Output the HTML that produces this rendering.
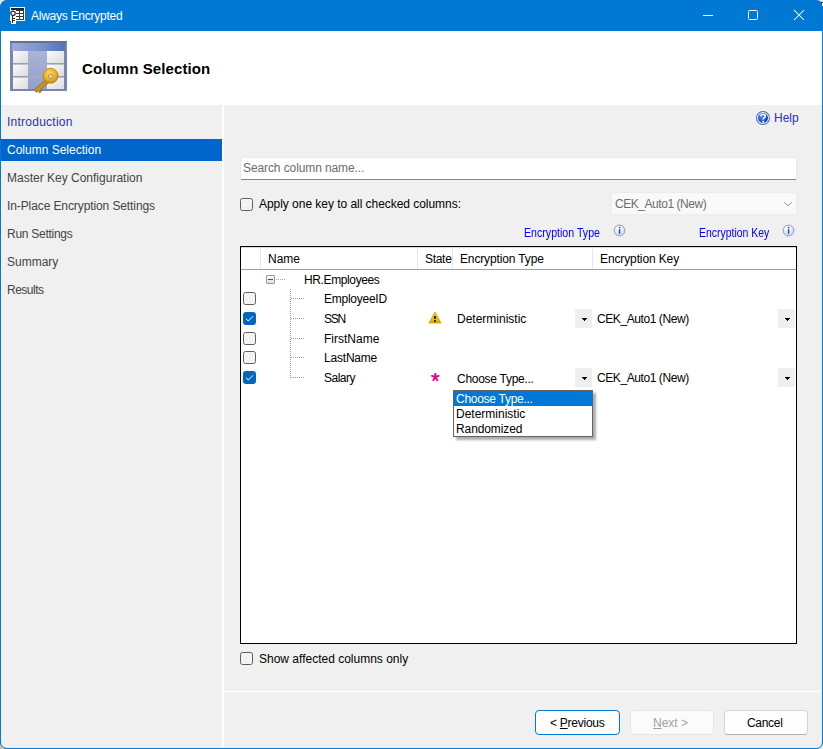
<!DOCTYPE html>
<html><head><meta charset="utf-8">
<style>
html,body{margin:0;padding:0;}
body{width:823px;height:749px;position:relative;overflow:hidden;background:#e6e6e6;font-family:"Liberation Sans",sans-serif;font-size:12px;color:#000;}
.a{position:absolute;}
.t{position:absolute;white-space:pre;font-size:12px;line-height:16px;height:16px;}
.win{position:absolute;left:0;top:0;width:823px;height:749px;background:#0078d4;border-radius:7px 7px 7px 7px;overflow:hidden;}
.cb{position:absolute;width:11px;height:11px;border:1px solid #5f5f5f;border-radius:2.5px;background:#f3f3f3;}
.cbc{position:absolute;width:13px;height:13px;border-radius:3px;background:#0067c0;}
.dd{position:absolute;width:17px;height:19px;background:#efefef;}
.dotv{position:absolute;width:1px;background-image:linear-gradient(to bottom,#a0a0a0 50%,transparent 50%);background-size:1px 2px;}
.doth{position:absolute;height:1px;background-image:linear-gradient(to right,#a0a0a0 50%,transparent 50%);background-size:2px 1px;}
</style></head>
<body>
<div class="a" style="left:0;top:739px;width:10px;height:10px;background:#c4c4c4"></div>
<div class="win">
  <!-- title bar text -->
  <svg class="a" style="left:10px;top:7px" width="16" height="17" viewBox="0 0 16 17" shape-rendering="crispEdges">
    <rect x="0" y="0" width="15" height="14" fill="#fff"/>
    <rect x="1" y="1" width="13" height="12" fill="#3a3a3a"/>
    <rect x="1" y="1" width="13" height="2" fill="#222"/>
    <rect x="6" y="4" width="3" height="2" fill="#fff"/><rect x="10" y="4" width="3" height="2" fill="#fff"/>
    <rect x="6" y="7" width="3" height="2" fill="#fff"/><rect x="10" y="7" width="3" height="2" fill="#fff"/>
    <rect x="6" y="10" width="3" height="2" fill="#fff"/><rect x="10" y="10" width="3" height="2" fill="#fff"/>
    <rect x="0" y="3" width="6" height="7" fill="#fff"/>
    <rect x="1" y="8" width="5" height="9" fill="#fff"/>
    <g shape-rendering="auto"><circle cx="3" cy="6.3" r="2.2" fill="#fff" stroke="#333" stroke-width="1.3"/></g>
    <rect x="2" y="9" width="1" height="7" fill="#333"/>
    <rect x="2" y="11" width="3" height="1" fill="#333"/><rect x="2" y="13" width="3" height="1" fill="#333"/>
  </svg>
  <div class="t" style="left:31px;top:8px;color:#fff;letter-spacing:-0.25px">Always Encrypted</div>
  <!-- window controls -->
  <div class="a" style="left:703px;top:15px;width:10px;height:1px;background:#fff"></div>
  <div class="a" style="left:748px;top:10px;width:8px;height:8px;border:1px solid #fff;border-radius:1.5px"></div>
  <svg class="a" style="left:793px;top:9px" width="12" height="12" viewBox="0 0 12 12"><path d="M1 1L11 11M11 1L1 11" stroke="#fff" stroke-width="1.05"/></svg>

  <!-- client area -->
  <div class="a" style="left:1px;top:31px;width:821px;height:717px;background:#f0f0f0;"></div>
  <div class="a" style="left:1px;top:31px;width:821px;height:74px;background:#fff;"></div>
  <!-- header icon -->
  <svg class="a" style="left:10px;top:40px" width="58" height="54" viewBox="0 0 58 54">
    <defs>
      <linearGradient id="hb" x1="0" x2="1" y1="0" y2="0"><stop offset="0" stop-color="#9eaad8"/><stop offset="0.5" stop-color="#8094cc"/><stop offset="1" stop-color="#4f72c0"/></linearGradient>
      <linearGradient id="cw" x1="0" x2="1" y1="0" y2="1"><stop offset="0" stop-color="#fbfbfb"/><stop offset="1" stop-color="#dcdcdc"/></linearGradient>
      <linearGradient id="cm" x1="0" x2="0" y1="0" y2="1"><stop offset="0" stop-color="#aab3d8"/><stop offset="1" stop-color="#93a0cc"/></linearGradient>
      <radialGradient id="gold" cx="0.45" cy="0.35" r="0.75"><stop offset="0" stop-color="#ffd75a"/><stop offset="0.55" stop-color="#e9b124"/><stop offset="1" stop-color="#b67d12"/></radialGradient>
    </defs>
    <rect x="0" y="1" width="57" height="50" fill="#7a86b0"/>
    <rect x="0" y="1" width="57" height="2" fill="#676f94"/>
    <rect x="2" y="3" width="53" height="8" fill="url(#hb)"/>
    <rect x="3" y="11" width="15" height="12" fill="url(#cw)"/>
    <rect x="18" y="11" width="19" height="38" fill="url(#cm)"/>
    <rect x="37" y="11" width="17" height="12" fill="url(#cw)"/>
        <rect x="3" y="24" width="15" height="12" fill="url(#cw)"/>
    <rect x="37" y="24" width="17" height="12" fill="url(#cw)"/>
        <rect x="3" y="37" width="15" height="12" fill="url(#cw)"/>
    <rect x="37" y="37" width="17" height="12" fill="url(#cw)"/>
    <rect x="3" y="23.4" width="51" height="1.3" fill="#a9aec0"/>
    <rect x="3" y="36.4" width="51" height="1.3" fill="#a9aec0"/>
    <path d="M36.5 39 L24.5 49.5 L26.5 52.5 L28.5 51 L29.5 53 L31.5 51.5 L30.5 49.5 L39.5 42 Z" fill="#c8921e" stroke="#8f6412" stroke-width="0.7"/>
    <circle cx="40.6" cy="35.8" r="7.5" fill="url(#gold)" stroke="#a97614" stroke-width="0.7"/>
    <circle cx="40.7" cy="36.3" r="2.3" fill="#cfcfcf" stroke="#9a7420" stroke-width="0.6"/>
  </svg>
  <div class="t" style="left:82px;top:59px;font-size:15px;line-height:20px;height:20px;font-weight:bold;letter-spacing:0.1px">Column Selection</div>

  <!-- left nav -->
  <div class="a" style="left:1px;top:105px;width:221px;height:642px;background:#f0f0f0;"></div>
  <div class="a" style="left:222px;top:105px;width:2px;height:642px;background:#fff;"></div>
  <div class="a" style="left:1px;top:139px;width:221px;height:22px;background:#0066cc;"></div>
  <div class="t" style="left:7px;top:114px;color:#2d2dc6;letter-spacing:0.25px">Introduction</div>
  <div class="t" style="left:7px;top:142px;color:#fff">Column Selection</div>
  <div class="t" style="left:7px;top:170px;color:#444">Master Key Configuration</div>
  <div class="t" style="left:7px;top:198px;color:#444;letter-spacing:-0.1px">In-Place Encryption Settings</div>
  <div class="t" style="left:7px;top:226px;color:#444;letter-spacing:-0.27px">Run Settings</div>
  <div class="t" style="left:7px;top:254px;color:#444">Summary</div>
  <div class="t" style="left:7px;top:282px;color:#444;letter-spacing:-0.5px">Results</div>

  <!-- right panel -->
  <div class="a" style="left:224px;top:105px;width:597px;height:586px;background:#f0f0f0;"></div>
  <div class="a" style="left:224px;top:692px;width:597px;height:55px;background:#f0f0f0;"></div>

  <!-- help -->
  <svg class="a" style="left:756px;top:111px" width="15" height="15" viewBox="0 0 15 15">
    <defs><radialGradient id="hg" cx="0.35" cy="0.35" r="0.75"><stop offset="0" stop-color="#4a8cf5"/><stop offset="1" stop-color="#0a36a0"/></radialGradient></defs>
    <circle cx="7" cy="7" r="7" fill="#4a6cb8"/>
    <circle cx="7" cy="7" r="6" fill="#e8f0ff"/>
    <circle cx="7" cy="7" r="5" fill="url(#hg)"/>
    <path d="M4.9 5.2 Q5 3.3 7.2 3.3 Q9.4 3.4 9.3 5.1 Q9.2 6.2 8 6.9 Q7.2 7.4 7.2 8.6" fill="none" stroke="#fff" stroke-width="1.6"/>
    <rect x="6.3" y="9.8" width="1.8" height="1.7" fill="#fff"/>
  </svg>
  <div class="t" style="left:774px;top:110px;color:#2d2dc6">Help</div>

  <!-- search -->
  <div class="a" style="left:240px;top:157px;width:557px;height:23px;background:#e8e8e8;border-radius:2px;"></div>
  <div class="a" style="left:241px;top:158px;width:555px;height:21px;background:#fff;border-radius:1px;"></div>
  <div class="a" style="left:241px;top:179px;width:555px;height:1px;background:#868686;"></div>
  <div class="t" style="left:243px;top:160px;color:#6d6d6d;letter-spacing:-0.1px">Search column name...</div>

  <!-- apply one key -->
  <div class="cb" style="left:240px;top:198px;"></div>
  <div class="t" style="left:259px;top:196px;letter-spacing:-0.04px">Apply one key to all checked columns:</div>
  <div class="a" style="left:611px;top:192px;width:186px;height:23px;background:#ececec;border-radius:2px;"></div>
  <div class="a" style="left:612px;top:193px;width:184px;height:21px;background:#f9f9f9;"></div>
  <div class="t" style="left:615px;top:196px;color:#6d6d6d;letter-spacing:-0.45px">CEK_Auto1 (New)</div>
  <svg class="a" style="left:783px;top:200px" width="10" height="7" viewBox="0 0 10 7"><path d="M1.3 2.2L5 5.8L8.7 2.2" fill="none" stroke="#7a7a7a" stroke-width="0.85"/></svg>

  <div class="t" style="left:524px;top:225px;color:#0000ff;transform-origin:0 0;transform:scaleX(0.885)">Encryption Type</div>
  <div class="t" style="left:699px;top:225px;color:#0000ff;transform-origin:0 0;transform:scaleX(0.87)">Encryption Key</div>
  <svg class="a" style="left:613px;top:224px" width="13" height="13" viewBox="0 0 13 13">
    <defs><radialGradient id="ig" cx="0.4" cy="0.3" r="0.8"><stop offset="0" stop-color="#ffffff"/><stop offset="1" stop-color="#c8d4e8"/></radialGradient></defs>
    <circle cx="6.5" cy="6.5" r="5.4" fill="url(#ig)" stroke="#7f93b8" stroke-width="0.9"/>
    <rect x="5.8" y="2.8" width="1.5" height="1.5" fill="#2a4ea8"/>
    <rect x="5.8" y="5.2" width="1.5" height="4.6" fill="#2a4ea8"/>
  </svg>
  <svg class="a" style="left:782px;top:224px" width="13" height="13" viewBox="0 0 13 13">
    <circle cx="6.5" cy="6.5" r="5.4" fill="url(#ig)" stroke="#7f93b8" stroke-width="0.9"/>
    <rect x="5.8" y="2.8" width="1.5" height="1.5" fill="#2a4ea8"/>
    <rect x="5.8" y="5.2" width="1.5" height="4.6" fill="#2a4ea8"/>
  </svg>

  <!-- grid -->
  <div class="a" style="left:240px;top:246px;width:555px;height:396px;border:1px solid #000;background:#fff;"></div>
  <div class="a" style="left:241px;top:247px;width:555px;height:1px;background:#d8d8d8;"></div>
  <div class="a" style="left:241px;top:269px;width:555px;height:1px;background:#a0a0a0;"></div>
  <div class="a" style="left:260px;top:249px;width:1px;height:20px;background:#e5e5e5;"></div>
  <div class="a" style="left:417px;top:249px;width:1px;height:20px;background:#e5e5e5;"></div>
  <div class="a" style="left:452px;top:249px;width:1px;height:20px;background:#e5e5e5;"></div>
  <div class="a" style="left:592px;top:249px;width:1px;height:20px;background:#e5e5e5;"></div>
  <div class="t" style="left:268px;top:251px;">Name</div>
  <div class="t" style="left:425px;top:251px;letter-spacing:-0.3px">State</div>
  <div class="t" style="left:460px;top:251px;letter-spacing:-0.14px">Encryption Type</div>
  <div class="t" style="left:600px;top:251px;letter-spacing:-0.12px">Encryption Key</div>

  <!-- tree -->
  <div class="a" style="left:266px;top:275px;width:7px;height:7px;border:1px solid #9a9a9a;border-radius:1px;background:linear-gradient(#fafafa,#e0e0e0);"></div>
  <div class="a" style="left:268px;top:279px;width:5px;height:1px;background:#3050a0;"></div>
  <div class="doth" style="left:276px;top:279px;width:10px;"></div>
  <div class="dotv" style="left:290px;top:289px;height:89px;"></div>
  <div class="doth" style="left:291px;top:298px;width:14px;"></div>
  <div class="doth" style="left:291px;top:318px;width:14px;"></div>
  <div class="doth" style="left:291px;top:338px;width:14px;"></div>
  <div class="doth" style="left:291px;top:357px;width:14px;"></div>
  <div class="doth" style="left:291px;top:377px;width:14px;"></div>

  <div class="t" style="left:304px;top:272px;letter-spacing:-0.38px">HR.Employees</div>
  <div class="cb" style="left:243px;top:292px;"></div>
  <div class="t" style="left:324px;top:291px;letter-spacing:-0.25px">EmployeeID</div>
  <div class="cbc" style="left:243px;top:312px;"><svg width="13" height="13" viewBox="0 0 13 13" style="position:absolute;left:0;top:0"><path d="M3 6.8L5.3 9L10 4.3" fill="none" stroke="#fff" stroke-width="1"/></svg></div>
  <div class="t" style="left:324px;top:311px;letter-spacing:-1.2px">SSN</div>
  <div class="cb" style="left:243px;top:332px;"></div>
  <div class="t" style="left:324px;top:331px;">FirstName</div>
  <div class="cb" style="left:243px;top:351px;"></div>
  <div class="t" style="left:324px;top:350px;letter-spacing:-0.2px">LastName</div>
  <div class="cbc" style="left:243px;top:371px;"><svg width="13" height="13" viewBox="0 0 13 13" style="position:absolute;left:0;top:0"><path d="M3 6.8L5.3 9L10 4.3" fill="none" stroke="#fff" stroke-width="1"/></svg></div>
  <div class="t" style="left:324px;top:370px;letter-spacing:-0.5px">Salary</div>

  <!-- SSN row -->
  <svg class="a" style="left:428px;top:311px" width="14" height="13" viewBox="0 0 14 13">
    <defs><linearGradient id="wg" x1="0" x2="0" y1="0" y2="1"><stop offset="0" stop-color="#f0d020"/><stop offset="1" stop-color="#e0b000"/></linearGradient></defs>
    <path d="M7 1 L13 12 L1 12 Z" fill="url(#wg)" stroke="#c9a000" stroke-width="0.8" stroke-linejoin="round"/>
    <rect x="6.1" y="5" width="1.8" height="2.8" fill="#111"/>
    <rect x="6.1" y="9.2" width="1.8" height="1.8" fill="#111"/>
  </svg>
  <div class="t" style="left:457px;top:311px;">Deterministic</div>
  <div class="dd" style="left:575px;top:309px;"><svg width="17" height="19" style="position:absolute;left:0;top:0" shape-rendering="crispEdges"><rect x="7" y="9" width="5" height="1" fill="#000"/><rect x="8" y="10" width="3" height="1" fill="#000"/><rect x="9" y="11" width="1" height="1" fill="#000"/></svg></div>
  <div class="t" style="left:597px;top:311px;letter-spacing:-0.42px">CEK_Auto1 (New)</div>
  <div class="dd" style="left:778px;top:309px;"><svg width="17" height="19" style="position:absolute;left:0;top:0" shape-rendering="crispEdges"><rect x="7" y="9" width="5" height="1" fill="#000"/><rect x="8" y="10" width="3" height="1" fill="#000"/><rect x="9" y="11" width="1" height="1" fill="#000"/></svg></div>

  <!-- Salary row -->
  <svg class="a" style="left:430px;top:372px" width="11" height="11" viewBox="0 0 11 11">
    <path d="M5.3 1.8 L5.3 5 M5.3 5 L2 3.9 M5.3 5 L8.6 3.9 M5.3 5 L3.3 8.3 M5.3 5 L7.3 8.3" stroke="#ec008c" stroke-width="1.9" stroke-linecap="round" fill="none"/>
  </svg>
  <div class="t" style="left:457px;top:371px;letter-spacing:-0.28px">Choose Type...</div>
  <div class="dd" style="left:575px;top:368px;"><svg width="17" height="19" style="position:absolute;left:0;top:0" shape-rendering="crispEdges"><rect x="7" y="9" width="5" height="1" fill="#000"/><rect x="8" y="10" width="3" height="1" fill="#000"/><rect x="9" y="11" width="1" height="1" fill="#000"/></svg></div>
  <div class="t" style="left:597px;top:370px;letter-spacing:-0.42px">CEK_Auto1 (New)</div>
  <div class="dd" style="left:778px;top:368px;"><svg width="17" height="19" style="position:absolute;left:0;top:0" shape-rendering="crispEdges"><rect x="7" y="9" width="5" height="1" fill="#000"/><rect x="8" y="10" width="3" height="1" fill="#000"/><rect x="9" y="11" width="1" height="1" fill="#000"/></svg></div>

  <!-- dropdown list -->
  <div class="a" style="left:456px;top:393px;width:140px;height:47px;background:rgba(0,0,0,0.32);filter:blur(1.2px);"></div>
  <div class="a" style="left:453px;top:390px;width:138px;height:45px;border:1px solid #646464;background:#fff;"></div>
  <div class="a" style="left:454px;top:391px;width:138px;height:15px;background:#0078d7;"></div>
  <div class="t" style="left:456px;top:391px;color:#fff;letter-spacing:-0.28px">Choose Type...</div>
  <div class="t" style="left:456px;top:406px;">Deterministic</div>
  <div class="t" style="left:456px;top:421px;letter-spacing:-0.1px">Randomized</div>

  <!-- show affected -->
  <div class="cb" style="left:240px;top:652px;"></div>
  <div class="t" style="left:259px;top:651px;">Show affected columns only</div>

  <!-- divider -->
  <div class="a" style="left:224px;top:691px;width:597px;height:1px;background:#fff;"></div>

  <!-- buttons -->
  <div class="a" style="left:535px;top:710px;width:83px;height:23px;border:1px solid #0078d4;border-radius:4px;background:#fdfdfd;"></div>
  <div class="t" style="left:550px;top:715px;letter-spacing:-0.25px">&lt; <span style="text-decoration:underline">P</span>revious</div>
  <div class="a" style="left:630px;top:710px;width:82px;height:23px;border:1px solid #e4e4e4;border-radius:4px;background:#fbfbfb;"></div>
  <div class="t" style="left:653px;top:715px;color:#a0a0a0"><span style="text-decoration:underline">N</span>ext &gt;</div>
  <div class="a" style="left:724px;top:710px;width:82px;height:23px;border:1px solid #d5d5d5;border-bottom-color:#b0b0b0;border-radius:4px;background:#fdfdfd;"></div>
  <div class="t" style="left:747px;top:715px;letter-spacing:-0.3px">Cancel</div>
  <div class="a" style="left:0;top:0;width:821px;height:747px;border:1px solid #0078d4;border-radius:7px;"></div>
</div>
<div class="a" style="left:821px;top:2px;width:2px;height:1px;background:#111"></div><div class="a" style="left:822px;top:3px;width:1px;height:3px;background:#fff"></div>
</body></html>
